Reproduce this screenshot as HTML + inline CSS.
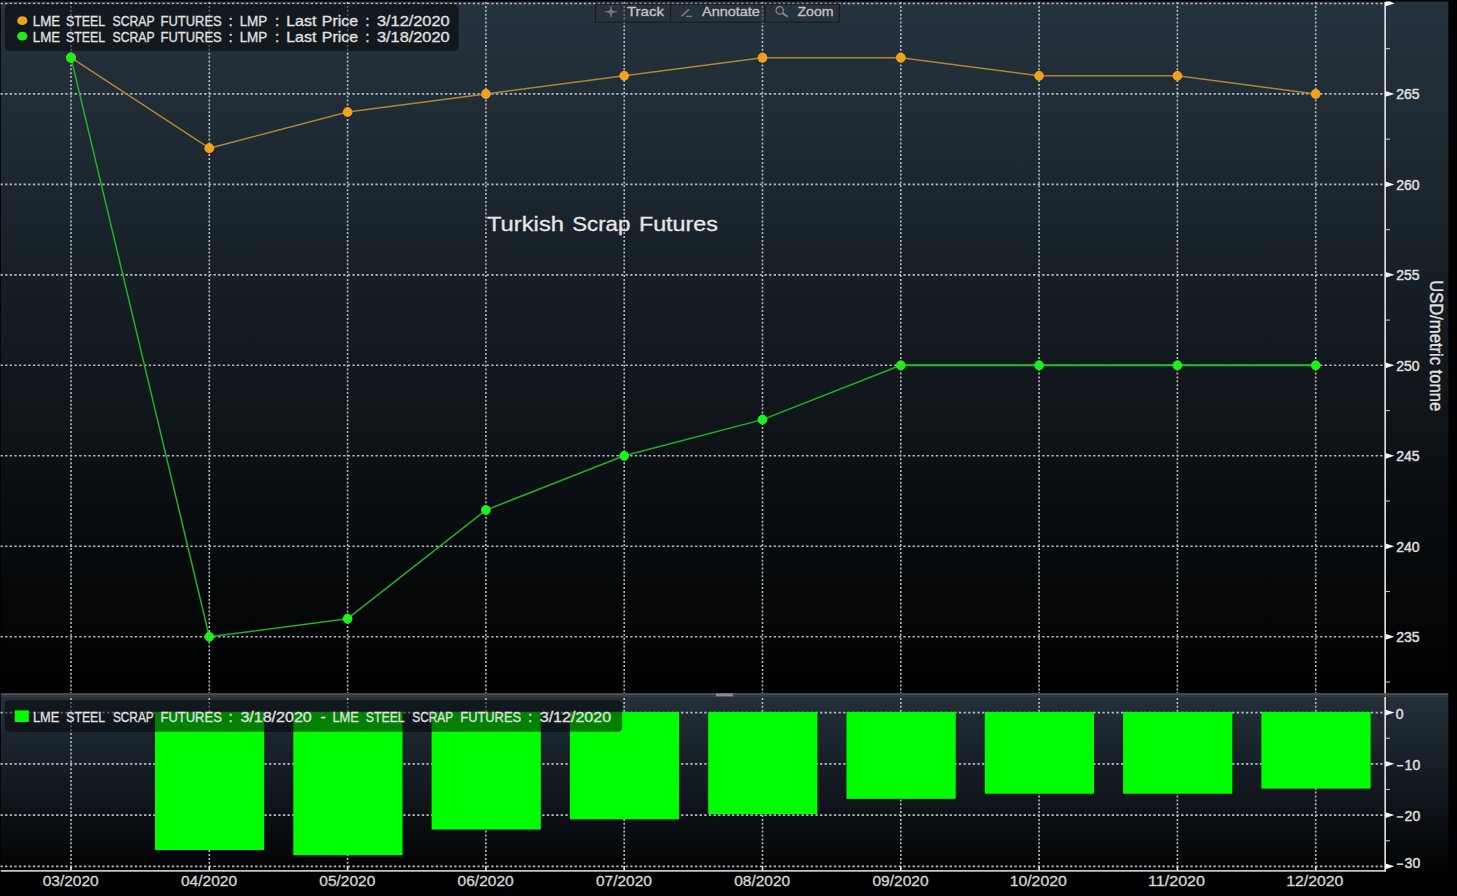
<!DOCTYPE html>
<html><head><meta charset="utf-8"><title>Turkish Scrap Futures</title>
<style>
html,body{margin:0;padding:0;background:#000;}
body{width:1457px;height:896px;overflow:hidden;position:relative;font-family:"Liberation Sans",sans-serif;}
svg{position:absolute;left:0;top:0;display:block;}
text{font-family:"Liberation Sans",sans-serif;}
</style></head><body>
<svg width="1457" height="896" viewBox="0 0 1457 896">
<defs>
<linearGradient id="g1" x1="0" y1="0" x2="0" y2="1">
<stop offset="0" stop-color="#25333e"/>
<stop offset="0.2" stop-color="#1e2a33"/>
<stop offset="0.38" stop-color="#172027"/>
<stop offset="0.55" stop-color="#11171c"/>
<stop offset="0.72" stop-color="#0a0e12"/>
<stop offset="0.88" stop-color="#040607"/>
<stop offset="1" stop-color="#000000"/>
</linearGradient>
<linearGradient id="g2" x1="0" y1="0" x2="0" y2="1">
<stop offset="0" stop-color="#23303a"/>
<stop offset="0.5" stop-color="#121920"/>
<stop offset="0.8" stop-color="#080b0e"/>
<stop offset="1" stop-color="#010202"/>
</linearGradient>
</defs>
<rect x="0" y="0" width="1457" height="896" fill="#000"/>
<rect x="0.8" y="1.5" width="1447.6" height="692" fill="url(#g1)"/>
<rect x="0.8" y="697" width="1447.6" height="175" fill="url(#g2)"/>

<g stroke="#b2babe" stroke-width="1.6" fill="none">
<line x1="0.5" x2="1385" y1="3.43" y2="3.43" stroke-dasharray="2.3 2.33"/>
<line x1="0.5" x2="1385" y1="93.90" y2="93.90" stroke-dasharray="2.3 2.33"/>
<line x1="0.5" x2="1385" y1="184.38" y2="184.38" stroke-dasharray="2.3 2.33"/>
<line x1="0.5" x2="1385" y1="274.85" y2="274.85" stroke-dasharray="2.3 2.33"/>
<line x1="0.5" x2="1385" y1="365.32" y2="365.32" stroke-dasharray="2.3 2.33"/>
<line x1="0.5" x2="1385" y1="455.80" y2="455.80" stroke-dasharray="2.3 2.33"/>
<line x1="0.5" x2="1385" y1="546.27" y2="546.27" stroke-dasharray="2.3 2.33"/>
<line x1="0.5" x2="1385" y1="636.75" y2="636.75" stroke-dasharray="2.3 2.33"/>
<line x1="71.00" x2="71.00" y1="2" y2="693" stroke-dasharray="2 1.9"/>
<line x1="209.30" x2="209.30" y1="2" y2="693" stroke-dasharray="2 1.9"/>
<line x1="347.60" x2="347.60" y1="2" y2="693" stroke-dasharray="2 1.9"/>
<line x1="485.90" x2="485.90" y1="2" y2="693" stroke-dasharray="2 1.9"/>
<line x1="624.20" x2="624.20" y1="2" y2="693" stroke-dasharray="2 1.9"/>
<line x1="762.50" x2="762.50" y1="2" y2="693" stroke-dasharray="2 1.9"/>
<line x1="900.80" x2="900.80" y1="2" y2="693" stroke-dasharray="2 1.9"/>
<line x1="1039.10" x2="1039.10" y1="2" y2="693" stroke-dasharray="2 1.9"/>
<line x1="1177.40" x2="1177.40" y1="2" y2="693" stroke-dasharray="2 1.9"/>
<line x1="1315.70" x2="1315.70" y1="2" y2="693" stroke-dasharray="2 1.9"/>
<line x1="0.5" x2="1385" y1="712.60" y2="712.60" stroke-dasharray="2.3 2.33"/>
<line x1="0.5" x2="1385" y1="763.85" y2="763.85" stroke-dasharray="2.3 2.33"/>
<line x1="0.5" x2="1385" y1="815.10" y2="815.10" stroke-dasharray="2.3 2.33"/>
<line x1="0.5" x2="1385" y1="866.35" y2="866.35" stroke-dasharray="2.3 2.33"/>
<line x1="71.00" x2="71.00" y1="698" y2="869" stroke-dasharray="2 1.9"/>
<line x1="209.30" x2="209.30" y1="698" y2="869" stroke-dasharray="2 1.9"/>
<line x1="347.60" x2="347.60" y1="698" y2="869" stroke-dasharray="2 1.9"/>
<line x1="485.90" x2="485.90" y1="698" y2="869" stroke-dasharray="2 1.9"/>
<line x1="624.20" x2="624.20" y1="698" y2="869" stroke-dasharray="2 1.9"/>
<line x1="762.50" x2="762.50" y1="698" y2="869" stroke-dasharray="2 1.9"/>
<line x1="900.80" x2="900.80" y1="698" y2="869" stroke-dasharray="2 1.9"/>
<line x1="1039.10" x2="1039.10" y1="698" y2="869" stroke-dasharray="2 1.9"/>
<line x1="1177.40" x2="1177.40" y1="698" y2="869" stroke-dasharray="2 1.9"/>
<line x1="1315.70" x2="1315.70" y1="698" y2="869" stroke-dasharray="2 1.9"/>
</g>
<rect x="155.00" y="711.90" width="109.2" height="138.18" fill="#00ff00"/>
<rect x="293.30" y="711.90" width="109.2" height="143.30" fill="#00ff00"/>
<rect x="431.60" y="711.90" width="109.2" height="117.67" fill="#00ff00"/>
<rect x="569.90" y="711.90" width="109.2" height="107.42" fill="#00ff00"/>
<rect x="708.20" y="711.90" width="109.2" height="102.30" fill="#00ff00"/>
<rect x="846.50" y="711.90" width="109.2" height="86.92" fill="#00ff00"/>
<rect x="984.80" y="711.90" width="109.2" height="81.80" fill="#00ff00"/>
<rect x="1123.10" y="711.90" width="109.2" height="81.80" fill="#00ff00"/>
<rect x="1261.40" y="711.90" width="109.2" height="76.67" fill="#00ff00"/>
<polyline points="71.00,57.71 209.30,148.19 347.60,112.00 485.90,93.90 624.20,75.81 762.50,57.71 900.80,57.71 1039.10,75.81 1177.40,75.81 1315.70,93.90" fill="none" stroke="#b08434" stroke-width="1.5" stroke-linejoin="round"/>
<polyline points="71.00,57.71 209.30,636.75 347.60,618.65 485.90,510.08 624.20,455.80 762.50,419.61 900.80,365.32 1039.10,365.32 1177.40,365.32 1315.70,365.32" fill="none" stroke="#1fb02a" stroke-width="1.5" stroke-linejoin="round"/>
<line x1="900.80" x2="1315.70" y1="365.32" y2="365.32" stroke="#1fb82a" stroke-width="2.0"/>
<path d="M66.00 57.71Q66.70 53.32 71.00 52.61Q75.30 53.32 76.00 57.71Q75.30 62.10 71.00 62.81Q66.70 62.10 66.00 57.71Z" fill="#f2a11f"/>
<path d="M204.30 148.19Q205.00 143.80 209.30 143.09Q213.60 143.80 214.30 148.19Q213.60 152.57 209.30 153.28Q205.00 152.57 204.30 148.19Z" fill="#f2a11f"/>
<path d="M342.60 112.00Q343.30 107.61 347.60 106.90Q351.90 107.61 352.60 112.00Q351.90 116.38 347.60 117.09Q343.30 116.38 342.60 112.00Z" fill="#f2a11f"/>
<path d="M480.90 93.90Q481.60 89.51 485.90 88.80Q490.20 89.51 490.90 93.90Q490.20 98.29 485.90 99.00Q481.60 98.29 480.90 93.90Z" fill="#f2a11f"/>
<path d="M619.20 75.81Q619.90 71.42 624.20 70.71Q628.50 71.42 629.20 75.81Q628.50 80.19 624.20 80.91Q619.90 80.19 619.20 75.81Z" fill="#f2a11f"/>
<path d="M757.50 57.71Q758.20 53.32 762.50 52.61Q766.80 53.32 767.50 57.71Q766.80 62.10 762.50 62.81Q758.20 62.10 757.50 57.71Z" fill="#f2a11f"/>
<path d="M895.80 57.71Q896.50 53.32 900.80 52.61Q905.10 53.32 905.80 57.71Q905.10 62.10 900.80 62.81Q896.50 62.10 895.80 57.71Z" fill="#f2a11f"/>
<path d="M1034.10 75.81Q1034.80 71.42 1039.10 70.71Q1043.40 71.42 1044.10 75.81Q1043.40 80.19 1039.10 80.91Q1034.80 80.19 1034.10 75.81Z" fill="#f2a11f"/>
<path d="M1172.40 75.81Q1173.10 71.42 1177.40 70.71Q1181.70 71.42 1182.40 75.81Q1181.70 80.19 1177.40 80.91Q1173.10 80.19 1172.40 75.81Z" fill="#f2a11f"/>
<path d="M1310.70 93.90Q1311.40 89.51 1315.70 88.80Q1320.00 89.51 1320.70 93.90Q1320.00 98.29 1315.70 99.00Q1311.40 98.29 1310.70 93.90Z" fill="#f2a11f"/>
<path d="M66.00 57.71Q66.70 53.32 71.00 52.61Q75.30 53.32 76.00 57.71Q75.30 62.10 71.00 62.81Q66.70 62.10 66.00 57.71Z" fill="#1fef1f"/>
<path d="M204.30 636.75Q205.00 632.36 209.30 631.65Q213.60 632.36 214.30 636.75Q213.60 641.14 209.30 641.85Q205.00 641.14 204.30 636.75Z" fill="#1fef1f"/>
<path d="M342.60 618.65Q343.30 614.27 347.60 613.55Q351.90 614.27 352.60 618.65Q351.90 623.04 347.60 623.75Q343.30 623.04 342.60 618.65Z" fill="#1fef1f"/>
<path d="M480.90 510.08Q481.60 505.70 485.90 504.98Q490.20 505.70 490.90 510.08Q490.20 514.47 485.90 515.18Q481.60 514.47 480.90 510.08Z" fill="#1fef1f"/>
<path d="M619.20 455.80Q619.90 451.41 624.20 450.70Q628.50 451.41 629.20 455.80Q628.50 460.19 624.20 460.90Q619.90 460.19 619.20 455.80Z" fill="#1fef1f"/>
<path d="M757.50 419.61Q758.20 415.22 762.50 414.51Q766.80 415.22 767.50 419.61Q766.80 424.00 762.50 424.71Q758.20 424.00 757.50 419.61Z" fill="#1fef1f"/>
<path d="M895.80 365.32Q896.50 360.94 900.80 360.22Q905.10 360.94 905.80 365.32Q905.10 369.71 900.80 370.42Q896.50 369.71 895.80 365.32Z" fill="#1fef1f"/>
<path d="M1034.10 365.32Q1034.80 360.94 1039.10 360.22Q1043.40 360.94 1044.10 365.32Q1043.40 369.71 1039.10 370.42Q1034.80 369.71 1034.10 365.32Z" fill="#1fef1f"/>
<path d="M1172.40 365.32Q1173.10 360.94 1177.40 360.22Q1181.70 360.94 1182.40 365.32Q1181.70 369.71 1177.40 370.42Q1173.10 369.71 1172.40 365.32Z" fill="#1fef1f"/>
<path d="M1310.70 365.32Q1311.40 360.94 1315.70 360.22Q1320.00 360.94 1320.70 365.32Q1320.00 369.71 1315.70 370.42Q1311.40 369.71 1310.70 365.32Z" fill="#1fef1f"/>
<rect x="1384.3" y="2" width="1.7" height="869.5" fill="#d8dadc"/>
<rect x="0.8" y="870.1" width="1385.3" height="1.6" fill="#d8d8d8"/>
<rect x="0.8" y="693.2" width="1447.6" height="2" fill="#505254"/>
<rect x="0.8" y="695.2" width="1447.6" height="1.7" fill="#3c4246"/>
<rect x="716" y="693.4" width="17" height="3" fill="#8c8c8c"/>
<path d="M1385.5 1.6 L1390.2 1.6 L1394.4 3.43 L1385.5 6.33 Z" fill="#f4f4f4"/>
<path d="M1385.5 91.00 L1394.4 93.90 L1385.5 96.80 Z" fill="#f4f4f4"/>
<text x="1396.2" y="99.40" font-size="14" fill="#dcdcdc" stroke="#dcdcdc" stroke-width="0.5">265</text>
<path d="M1385.5 181.47 L1394.4 184.38 L1385.5 187.28 Z" fill="#f4f4f4"/>
<text x="1396.2" y="189.88" font-size="14" fill="#dcdcdc" stroke="#dcdcdc" stroke-width="0.5">260</text>
<path d="M1385.5 271.95 L1394.4 274.85 L1385.5 277.75 Z" fill="#f4f4f4"/>
<text x="1396.2" y="280.35" font-size="14" fill="#dcdcdc" stroke="#dcdcdc" stroke-width="0.5">255</text>
<path d="M1385.5 362.42 L1394.4 365.32 L1385.5 368.22 Z" fill="#f4f4f4"/>
<text x="1396.2" y="370.82" font-size="14" fill="#dcdcdc" stroke="#dcdcdc" stroke-width="0.5">250</text>
<path d="M1385.5 452.90 L1394.4 455.80 L1385.5 458.70 Z" fill="#f4f4f4"/>
<text x="1396.2" y="461.30" font-size="14" fill="#dcdcdc" stroke="#dcdcdc" stroke-width="0.5">245</text>
<path d="M1385.5 543.38 L1394.4 546.27 L1385.5 549.17 Z" fill="#f4f4f4"/>
<text x="1396.2" y="551.77" font-size="14" fill="#dcdcdc" stroke="#dcdcdc" stroke-width="0.5">240</text>
<path d="M1385.5 633.85 L1394.4 636.75 L1385.5 639.65 Z" fill="#f4f4f4"/>
<text x="1396.2" y="642.25" font-size="14" fill="#dcdcdc" stroke="#dcdcdc" stroke-width="0.5">235</text>
<rect x="1385.5" y="48.11" width="4.4" height="1.1" fill="#c4c4c4"/>
<rect x="1385.5" y="138.59" width="4.4" height="1.1" fill="#c4c4c4"/>
<rect x="1385.5" y="229.06" width="4.4" height="1.1" fill="#c4c4c4"/>
<rect x="1385.5" y="319.54" width="4.4" height="1.1" fill="#c4c4c4"/>
<rect x="1385.5" y="410.01" width="4.4" height="1.1" fill="#c4c4c4"/>
<rect x="1385.5" y="500.49" width="4.4" height="1.1" fill="#c4c4c4"/>
<rect x="1385.5" y="590.96" width="4.4" height="1.1" fill="#c4c4c4"/>
<rect x="1385.5" y="681.44" width="4.4" height="1.1" fill="#c4c4c4"/>
<path d="M1385.5 709.70 L1394.4 712.60 L1385.5 715.50 Z" fill="#f4f4f4"/>
<text x="1395.8" y="718.70" font-size="14" fill="#dcdcdc" stroke="#dcdcdc" stroke-width="0.5">0</text>
<path d="M1385.5 760.95 L1394.4 763.85 L1385.5 766.75 Z" fill="#f4f4f4"/>
<rect x="1396.8" y="764.95" width="6.4" height="1.5" fill="#dcdcdc"/>
<text x="1404.6" y="769.95" font-size="14" fill="#dcdcdc" stroke="#dcdcdc" stroke-width="0.5">10</text>
<path d="M1385.5 812.20 L1394.4 815.10 L1385.5 818.00 Z" fill="#f4f4f4"/>
<rect x="1396.8" y="816.20" width="6.4" height="1.5" fill="#dcdcdc"/>
<text x="1404.6" y="821.20" font-size="14" fill="#dcdcdc" stroke="#dcdcdc" stroke-width="0.5">20</text>
<path d="M1385.5 863.45 L1394.4 866.35 L1385.5 869.25 Z" fill="#f4f4f4"/>
<rect x="1396.8" y="863.40" width="6.4" height="1.5" fill="#dcdcdc"/>
<text x="1404.6" y="868.40" font-size="14" fill="#dcdcdc" stroke="#dcdcdc" stroke-width="0.5">30</text>
<rect x="1385.5" y="737.68" width="4.4" height="1.1" fill="#c4c4c4"/>
<rect x="1385.5" y="788.93" width="4.4" height="1.1" fill="#c4c4c4"/>
<rect x="1385.5" y="840.18" width="4.4" height="1.1" fill="#c4c4c4"/>
<rect x="70.20" y="866.5" width="1.6" height="4" fill="#e0e0e0"/>
<rect x="208.50" y="866.5" width="1.6" height="4" fill="#e0e0e0"/>
<rect x="346.80" y="866.5" width="1.6" height="4" fill="#e0e0e0"/>
<rect x="485.10" y="866.5" width="1.6" height="4" fill="#e0e0e0"/>
<rect x="623.40" y="866.5" width="1.6" height="4" fill="#e0e0e0"/>
<rect x="761.70" y="866.5" width="1.6" height="4" fill="#e0e0e0"/>
<rect x="900.00" y="866.5" width="1.6" height="4" fill="#e0e0e0"/>
<rect x="1038.30" y="866.5" width="1.6" height="4" fill="#e0e0e0"/>
<rect x="1176.60" y="866.5" width="1.6" height="4" fill="#e0e0e0"/>
<rect x="1314.90" y="866.5" width="1.6" height="4" fill="#e0e0e0"/>
<text transform="translate(1429.6 280.2) rotate(90)" font-size="19" fill="#e2e2e2" stroke="#e2e2e2" stroke-width="0.35" textLength="131" lengthAdjust="spacingAndGlyphs">USD/metric tonne</text>
<rect x="5.3" y="4.6" width="452.8" height="46" rx="4" fill="#020304" fill-opacity="0.52" stroke="#000" stroke-opacity="0.35"/>
<ellipse cx="22.3" cy="20.7" rx="5.1" ry="4.4" fill="#f2a11f"/>
<ellipse cx="22.3" cy="36.2" rx="5.1" ry="4.4" fill="#1fef1f"/>
<rect x="5.3" y="700.8" width="616.5" height="30.5" rx="4" fill="#020304" fill-opacity="0.5" stroke="#000" stroke-opacity="0.35"/>
<rect x="14.8" y="710.4" width="14" height="11.6" fill="#00ff00"/>
<rect x="595.4" y="4.2" width="244" height="18" fill="#2a333b" fill-opacity="0.55" stroke="#141a1f" stroke-width="1"/>
<line x1="670.7" x2="670.7" y1="4.5" y2="22" stroke="#141a1f"/><line x1="765" x2="765" y1="4.5" y2="22" stroke="#141a1f"/>
<g stroke="#858c91" stroke-width="1" fill="none"><path d="M605.2 11.8H616.8M611 6.2V17.4"/><path d="M611 9.3L613.6 11.8L611 14.3L608.4 11.8Z"/></g>
<g stroke="#858c91" stroke-width="1.2" fill="none"><path d="M681.5 16.2L689 9.2"/><path d="M686 16.3H691.7" stroke-width="1.1"/></g>
<g stroke="#858c91" stroke-width="1.2" fill="none"><circle cx="779.7" cy="10.4" r="3.7"/><path d="M782.6 13.2L787.7 16.7" stroke-width="1.8"/></g>
<text transform="translate(32.85 26.00) scale(0.9509 1)" font-size="14.0" fill="#e0e0e0" stroke="#e0e0e0" stroke-width="0.3">LME</text>
<text transform="translate(65.90 26.00) scale(0.8863 1)" font-size="14.0" fill="#e0e0e0" stroke="#e0e0e0" stroke-width="0.3">STEEL</text>
<text transform="translate(112.60 26.00) scale(0.8706 1)" font-size="14.0" fill="#e0e0e0" stroke="#e0e0e0" stroke-width="0.3">SCRAP</text>
<text transform="translate(160.58 26.00) scale(0.9248 1)" font-size="14.0" fill="#e0e0e0" stroke="#e0e0e0" stroke-width="0.3">FUTURES</text>
<text transform="translate(228.50 26.00) scale(1.1000 1)" font-size="14.0" fill="#e0e0e0" stroke="#e0e0e0" stroke-width="0.3">:</text>
<text transform="translate(239.64 26.00) scale(0.9618 1)" font-size="14.0" fill="#e0e0e0" stroke="#e0e0e0" stroke-width="0.3">LMP</text>
<text transform="translate(275.00 26.00) scale(1.1000 1)" font-size="14.0" fill="#e0e0e0" stroke="#e0e0e0" stroke-width="0.3">:</text>
<text transform="translate(286.16 26.00) scale(1.1419 1)" font-size="14.0" fill="#e0e0e0" stroke="#e0e0e0" stroke-width="0.3">Last</text>
<text transform="translate(321.87 26.00) scale(1.1315 1)" font-size="14.0" fill="#e0e0e0" stroke="#e0e0e0" stroke-width="0.3">Price</text>
<text transform="translate(365.30 26.00) scale(1.1000 1)" font-size="14.0" fill="#e0e0e0" stroke="#e0e0e0" stroke-width="0.3">:</text>
<text transform="translate(376.90 26.00) scale(1.1681 1)" font-size="14.0" fill="#e0e0e0" stroke="#e0e0e0" stroke-width="0.3">3/12/2020</text>
<text transform="translate(32.85 41.60) scale(0.9509 1)" font-size="14.0" fill="#e0e0e0" stroke="#e0e0e0" stroke-width="0.3">LME</text>
<text transform="translate(65.90 41.60) scale(0.8863 1)" font-size="14.0" fill="#e0e0e0" stroke="#e0e0e0" stroke-width="0.3">STEEL</text>
<text transform="translate(112.60 41.60) scale(0.8706 1)" font-size="14.0" fill="#e0e0e0" stroke="#e0e0e0" stroke-width="0.3">SCRAP</text>
<text transform="translate(160.58 41.60) scale(0.9248 1)" font-size="14.0" fill="#e0e0e0" stroke="#e0e0e0" stroke-width="0.3">FUTURES</text>
<text transform="translate(228.50 41.60) scale(1.1000 1)" font-size="14.0" fill="#e0e0e0" stroke="#e0e0e0" stroke-width="0.3">:</text>
<text transform="translate(239.64 41.60) scale(0.9618 1)" font-size="14.0" fill="#e0e0e0" stroke="#e0e0e0" stroke-width="0.3">LMP</text>
<text transform="translate(275.00 41.60) scale(1.1000 1)" font-size="14.0" fill="#e0e0e0" stroke="#e0e0e0" stroke-width="0.3">:</text>
<text transform="translate(286.16 41.60) scale(1.1419 1)" font-size="14.0" fill="#e0e0e0" stroke="#e0e0e0" stroke-width="0.3">Last</text>
<text transform="translate(321.87 41.60) scale(1.1315 1)" font-size="14.0" fill="#e0e0e0" stroke="#e0e0e0" stroke-width="0.3">Price</text>
<text transform="translate(365.30 41.60) scale(1.1000 1)" font-size="14.0" fill="#e0e0e0" stroke="#e0e0e0" stroke-width="0.3">:</text>
<text transform="translate(376.90 41.60) scale(1.1681 1)" font-size="14.0" fill="#e0e0e0" stroke="#e0e0e0" stroke-width="0.3">3/18/2020</text>
<text transform="translate(32.98 722.00) scale(0.9181 1)" font-size="14.0" fill="#e0e0e0" stroke="#e0e0e0" stroke-width="0.3">LME</text>
<text transform="translate(66.30 722.00) scale(0.8729 1)" font-size="14.0" fill="#e0e0e0" stroke="#e0e0e0" stroke-width="0.3">STEEL</text>
<text transform="translate(112.90 722.00) scale(0.8477 1)" font-size="14.0" fill="#e0e0e0" stroke="#e0e0e0" stroke-width="0.3">SCRAP</text>
<text transform="translate(160.47 722.00) scale(0.9294 1)" font-size="14.0" fill="#e0e0e0" stroke="#e0e0e0" stroke-width="0.3">FUTURES</text>
<text transform="translate(228.40 722.00) scale(1.1000 1)" font-size="14.0" fill="#e0e0e0" stroke="#e0e0e0" stroke-width="0.3">:</text>
<text transform="translate(240.40 722.00) scale(1.1473 1)" font-size="14.0" fill="#e0e0e0" stroke="#e0e0e0" stroke-width="0.3">3/18/2020</text>
<text transform="translate(320.40 722.00) scale(1.1400 1)" font-size="14.0" fill="#e0e0e0" stroke="#e0e0e0" stroke-width="0.3">-</text>
<text transform="translate(332.38 722.00) scale(0.9181 1)" font-size="14.0" fill="#e0e0e0" stroke="#e0e0e0" stroke-width="0.3">LME</text>
<text transform="translate(365.80 722.00) scale(0.8774 1)" font-size="14.0" fill="#e0e0e0" stroke="#e0e0e0" stroke-width="0.3">STEEL</text>
<text transform="translate(412.30 722.00) scale(0.8477 1)" font-size="14.0" fill="#e0e0e0" stroke="#e0e0e0" stroke-width="0.3">SCRAP</text>
<text transform="translate(460.28 722.00) scale(0.9201 1)" font-size="14.0" fill="#e0e0e0" stroke="#e0e0e0" stroke-width="0.3">FUTURES</text>
<text transform="translate(528.00 722.00) scale(1.1000 1)" font-size="14.0" fill="#e0e0e0" stroke="#e0e0e0" stroke-width="0.3">:</text>
<text transform="translate(539.70 722.00) scale(1.1489 1)" font-size="14.0" fill="#e0e0e0" stroke="#e0e0e0" stroke-width="0.3">3/12/2020</text>
<text transform="translate(487.00 231.40) scale(1.1994 1)" font-size="19.8" fill="#e6e6e6" stroke="#e6e6e6" stroke-width="0.3">Turkish</text>
<text transform="translate(572.30 231.40) scale(1.1224 1)" font-size="19.8" fill="#e6e6e6" stroke="#e6e6e6" stroke-width="0.3">Scrap</text>
<text transform="translate(638.92 231.40) scale(1.1773 1)" font-size="19.8" fill="#e6e6e6" stroke="#e6e6e6" stroke-width="0.3">Futures</text>
<text transform="translate(627.00 16.10) scale(1.1467 1)" font-size="13.1" fill="#c2c6ca" stroke="#c2c6ca" stroke-width="0.3">Track</text>
<text transform="translate(702.00 16.10) scale(1.1048 1)" font-size="13.1" fill="#c2c6ca" stroke="#c2c6ca" stroke-width="0.3">Annotate</text>
<text transform="translate(797.50 16.10) scale(1.0756 1)" font-size="13.1" fill="#c2c6ca" stroke="#c2c6ca" stroke-width="0.3">Zoom</text>
<text transform="translate(42.70 885.60) scale(1.1152 1)" font-size="13.9" fill="#d6d6d6" stroke="#d6d6d6" stroke-width="0.3">03/2020</text>
<text transform="translate(181.00 885.60) scale(1.1152 1)" font-size="13.9" fill="#d6d6d6" stroke="#d6d6d6" stroke-width="0.3">04/2020</text>
<text transform="translate(319.30 885.60) scale(1.1152 1)" font-size="13.9" fill="#d6d6d6" stroke="#d6d6d6" stroke-width="0.3">05/2020</text>
<text transform="translate(457.60 885.60) scale(1.1152 1)" font-size="13.9" fill="#d6d6d6" stroke="#d6d6d6" stroke-width="0.3">06/2020</text>
<text transform="translate(595.90 885.60) scale(1.1152 1)" font-size="13.9" fill="#d6d6d6" stroke="#d6d6d6" stroke-width="0.3">07/2020</text>
<text transform="translate(734.20 885.60) scale(1.1152 1)" font-size="13.9" fill="#d6d6d6" stroke="#d6d6d6" stroke-width="0.3">08/2020</text>
<text transform="translate(872.50 885.60) scale(1.1152 1)" font-size="13.9" fill="#d6d6d6" stroke="#d6d6d6" stroke-width="0.3">09/2020</text>
<text transform="translate(1009.66 885.60) scale(1.1377 1)" font-size="13.9" fill="#d6d6d6" stroke="#d6d6d6" stroke-width="0.3">10/2020</text>
<text transform="translate(1147.94 885.60) scale(1.1619 1)" font-size="13.9" fill="#d6d6d6" stroke="#d6d6d6" stroke-width="0.3">11/2020</text>
<text transform="translate(1286.26 885.60) scale(1.1377 1)" font-size="13.9" fill="#d6d6d6" stroke="#d6d6d6" stroke-width="0.3">12/2020</text>
</svg></body></html>
